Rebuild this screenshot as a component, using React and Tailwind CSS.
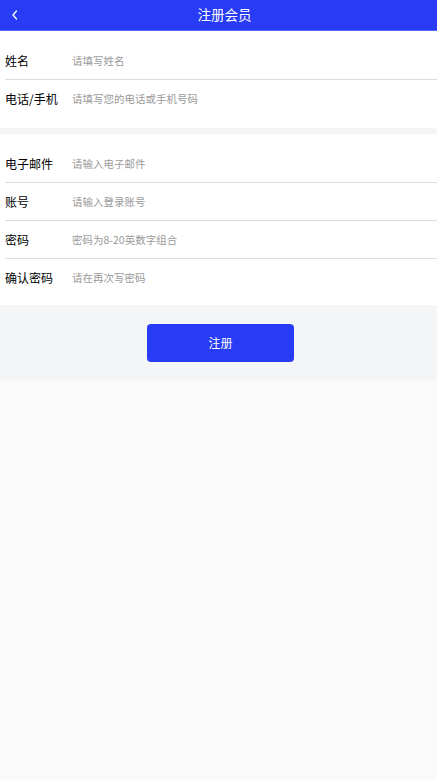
import React from "react";

const FONT = { fontFamily: '"Noto Sans CJK SC", "Noto Sans", sans-serif' };

function Row({ label, placeholder, last, type = "text" }) {
  return (
    <div className={`flex items-center h-[38px] ${last ? "" : "border-b border-[#dcdcdc]"}`}>
      <label className="w-[67px] shrink-0 text-[12px] text-black">{label}</label>
      <input
        type={type}
        placeholder={placeholder}
        className="flex-1 bg-transparent text-[10.5px] outline-none placeholder:text-[#9a9a9a]"
      />
    </div>
  );
}

export default function App() {
  return (
    <div className="min-h-[780px] bg-[#fafafa]" style={FONT}>
      <header className="relative flex h-[31px] items-center justify-center border-b border-[#5468f7] bg-[#283cf6] pl-[12px] text-white">
        <button className="absolute left-[8px] top-[7px] p-0.5">
          <svg width="10" height="12" viewBox="0 0 10 12" fill="none">
            <path d="M6.5 2 L3 6 L6.5 10" stroke="white" strokeWidth="1.3" strokeLinecap="round" strokeLinejoin="round" />
          </svg>
        </button>
        <h1 className="text-[13.5px] leading-none">注册会员</h1>
      </header>

      <section className="bg-white pl-[5px] pt-[11px] pb-[10px]">
        <Row label="姓名" placeholder="请填写姓名" />
        <Row label="电话/手机" placeholder="请填写您的电话或手机号码" last />
      </section>

      <div className="h-[6px] bg-[#f4f5f7]" />

      <section className="bg-white pl-[5px] pt-[11px] pb-[8px]">
        <Row label="电子邮件" placeholder="请输入电子邮件" />
        <Row label="账号" placeholder="请输入登录账号" />
        <Row label="密码" placeholder="密码为8-20英数字组合" type="password" />
        <Row label="确认密码" placeholder="请在再次写密码" type="password" last />
      </section>

      <div className="flex justify-center bg-[#f4f5f7] pl-[4px] pt-[19px] pb-[18px]">
        <button className="h-[38px] w-[147px] rounded-[4px] bg-[#283cf6] text-[12px] text-white">
          注册
        </button>
      </div>
    </div>
  );
}
